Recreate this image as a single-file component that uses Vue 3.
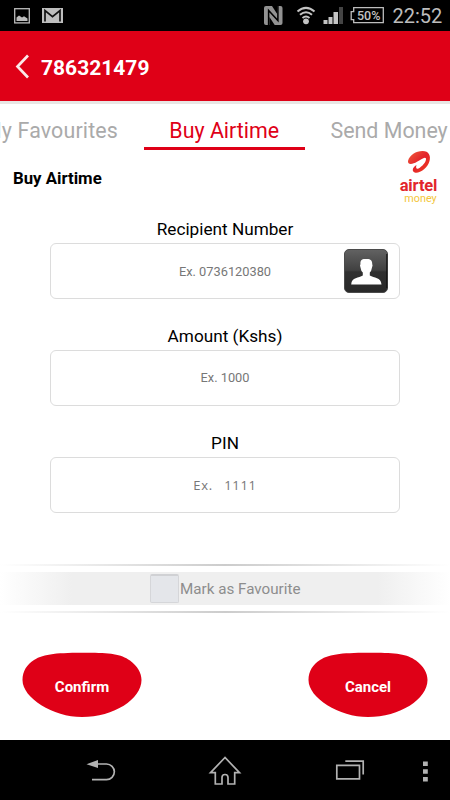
<script setup>
import { ref } from 'vue'

const tabs = [
  { name: 'My Favourites', cls: 'prev' },
  { name: 'Buy Airtime', cls: 'active' },
  { name: 'Send Money', cls: 'next' },
]
const fields = ref([
  { label: 'Recipient Number', hint: 'Ex. 0736120380', contact: true, cls: 'number' },
  { label: 'Amount (Kshs)', hint: 'Ex. 1000', cls: 'amount' },
  { label: 'PIN', hint: 'Ex. 1111', cls: 'pin' },
])
const actions = ['Confirm', 'Cancel']
</script>

<template>
  <div class="screen">
    <div class="status">
      <svg class="status-left" width="70" height="31" viewBox="0 0 70 31">
        <rect x="14.7" y="8.7" width="14.6" height="14.2" fill="none" stroke="#bcbcbc" stroke-width="1.3" />
        <path d="M16.500 21V17.500l2.500-2.100 3 2 2-1.200 3.500 2.300V21z" fill="#bcbcbc" />
        <rect x="42" y="8" width="21" height="15" fill="#bebebe" />
        <path d="M45 21.500V10.500l7.500 6.200 7.500-6.200V21.500" fill="none" stroke="#111" stroke-width="1.700" />
      </svg>
      <svg class="status-icons" width="127" height="31" viewBox="260 0 127 31">
        <path d="M264 8q0-2 2-2h14.500q2 0 2 2v15q0 2-2 2H266q-2 0-2-2z" fill="#929292" />
        <path d="M268.600 25V10.500L277.900 20.500V6" fill="none" stroke="#000" stroke-width="1.500" />
        <path d="M272 6h5.200v8zM269.400 17l5.300 8h-5.300z" fill="#000" />
        <g fill="none" stroke="#c4c4c4" stroke-width="2">
          <path d="M297.500 11.500q8.500-7.200 17 0M300 14.800q6-5.200 12 0M302.500 17.900q3.500-2.900 7 0" />
        </g>
        <circle cx="306" cy="21.300" r="2.900" fill="#c4c4c4" />
        <path d="M323.500 20h4v4h-4zM328.500 17h4v7h-4zM333.500 12h4.500v12h-4.500z" fill="#c4c4c4" />
        <path d="M339 7h4v17h-4z" fill="#444" />
        <path d="M353.700 7.700h29.600v15h-29.600v-3h-2.500v-8h2.500z" fill="none" stroke="#bdbdbd" stroke-width="1.300" />
        <text x="368.700" y="19.800" class="battery-text" text-anchor="middle">50%</text>
      </svg>
      <span class="clock">22:52</span>
    </div>

    <header class="header">
      <svg width="15" height="25" viewBox="0 0 15 25"><path d="M13 1.500L2.500 12.500 13 23.500" fill="none" stroke="#fbe9e9" stroke-width="2.700" /></svg>
      <span>786321479</span>
    </header>

    <nav class="tabs">
      <span v-for="t in tabs" :key="t.name" class="tab" :class="t.cls"><b>{{ t.name }}</b></span>
    </nav>

    <div class="section">
      <h1>Buy Airtime</h1>
      <div class="brand">
        <svg width="24" height="24" viewBox="407 150 24 24">
          <defs>
            <linearGradient id="swoosh" x1="0" y1="0" x2="1" y2="1">
              <stop offset="0" stop-color="#f0603c" /><stop offset=".5" stop-color="#e3222a" /><stop offset="1" stop-color="#f0401f" />
            </linearGradient>
          </defs>
          <path d="M408 161C409.500 155 416 151 422.500 151C429 151 431 156 429.500 161C428 167.500 420 173.500 415.500 172.800C411.500 172 412 167.500 416.500 165C415.500 168 416.500 169.500 418.500 168.500C422 166.500 426.500 162 426 158.500C425 156 421 159.500 417 161.800C412.500 164.500 407.500 165 408 161z" fill="url(#swoosh)" />
        </svg>
        <span class="logo-name">airtel</span>
        <span class="logo-sub">money</span>
      </div>
    </div>

    <main class="form">
      <div v-for="f in fields" :key="f.label" class="field" :class="f.cls">
        <label>{{ f.label }}</label>
        <div class="box">
          <span>{{ f.hint }}</span>
          <svg v-if="f.contact" class="contact" width="44" height="44" viewBox="0 0 44 44">
            <defs>
              <linearGradient id="tile" x1="0" y1="0" x2="0" y2="1">
                <stop offset="0" stop-color="#626262" /><stop offset=".48" stop-color="#414141" /><stop offset=".52" stop-color="#303030" /><stop offset="1" stop-color="#292929" />
              </linearGradient>
            </defs>
            <rect x=".5" y=".5" width="43" height="43" rx="4.500" fill="url(#tile)" stroke="#4b4b4b" />
            <path d="M42.800 5V39" stroke="#111" />
            <path d="M22 10C26 9.500 28.500 11.500 28.200 15Q29 16 28 18.500Q27.500 22 25.800 23.500V26.500C30 29 37 28 37.500 35.500H7.200C7.500 28 15 29 18.800 26.500V23.500Q17 22 16.500 18.500Q15.500 16 16.500 15C16 11.500 18 9.500 22 10z" fill="#fff" />
          </svg>
        </div>
      </div>
    </main>

    <div class="favourite">
      <div class="rule"></div>
      <div class="band"><i class="check"></i><span>Mark as Favourite</span></div>
      <div class="rule"></div>
    </div>

    <div class="actions">
      <button v-for="a in actions" :key="a">
        <svg width="120" height="66" viewBox="0 0 120 66"><path d="M65 .7C88 .7 99 2 108 8.500C115.500 14 119.500 21 119.500 28C119.500 47 92 65 60 65C31 65 .5 46 .5 28C.5 19 5 12.500 12 8C22 1.500 36 .7 65 .7z" fill="#df0017" /></svg>
        <span>{{ a }}</span>
      </button>
    </div>

    <footer class="navbar">
      <svg width="450" height="60" viewBox="0 740 450 60">
        <g fill="none" stroke="#b2b2b2" stroke-width="1.700">
          <path d="M96 764h10.500a7.800 7.800 0 0 1 0 15.700H92" />
          <path d="M225 757.500L210.500 772.700H215.300V784H222V777.500q0-3 3-3t3 3V784H234.700V772.700H239.500z" />
          <path d="M336.800 765.300H359.500V778.800H336.800zM345.300 761.200H363.200V774.500" />
        </g>
        <path d="M86.500 764.200L98 760V768zM423 761.500h4.800v4.500H423zM423 769.200h4.800v4.500H423zM423 777h4.800v4.500H423z" fill="#b2b2b2" />
      </svg>
    </footer>
  </div>
</template>

<style>
body { margin: 0; background: #fff; }
</style>

<style scoped>
* { box-sizing: border-box; }
.screen { width: 450px; height: 800px; display: flex; flex-direction: column; overflow: hidden; background: #fff; font-family: Roboto, sans-serif; color: #000; }
.status { height: 31px; flex: none; background: #000; display: flex; }
.status-left { margin-right: auto; }
.clock { width: 63px; padding-left: 5.500px; color: #bdbdbd; font-size: 20px; line-height: 33px; white-space: nowrap; }
.battery-text { font-size: 12.500px; font-weight: 500; fill: #c4c4c4; }
.header { height: 70px; flex: none; background: #df0017; display: flex; align-items: center; padding-left: 15px; color: #fff; font-size: 21px; font-weight: 700; }
.header span { margin: 3px 0 0 11px; }
.tabs { height: 49px; flex: none; display: flex; justify-content: space-between; border-top: 3px solid #e8e6e4; font-size: 21.400px; }
.tab { display: flex; justify-content: center; line-height: 53px; color: #aaa; white-space: nowrap; }
.tab b { font-weight: 400; }
.prev { width: 118px; justify-content: flex-end; letter-spacing: .15px; }
.active { width: 161px; color: #df0017; border-bottom: 3px solid #df0017; }
.next { width: 119.500px; justify-content: flex-start; }
.section { height: 58px; flex: none; display: flex; justify-content: space-between; padding: 0 9px 0 13px; }
.section h1 { margin: 0; font-size: 16.800px; line-height: 57px; font-weight: 700; }
.brand { width: 44px; display: flex; flex-direction: column; align-items: center; padding-top: 0; }
.brand svg { flex: none; }
.logo-name { font-size: 16.500px; line-height: 14px; font-weight: 700; letter-spacing: -.15px; color: #e2262c; margin-top: 5px; margin-right: 1px; }
.logo-sub { font-size: 10.800px; line-height: 11px; color: #f3c63a; margin: 0 0 0 3px; }
.form { height: 356px; flex: none; padding: 10px 50px 0; display: flex; flex-direction: column; }
.field { height: 106.800px; flex: none; display: flex; flex-direction: column; }
.field label { height: 25.100px; line-height: 23px; text-align: center; font-size: 17.200px; }
.box { height: 56px; border: 1px solid #dcdcdc; border-radius: 6px; display: flex; align-items: center; justify-content: center; font-size: 12.800px; color: #777; position: relative; }
.contact { position: absolute; right: 11px; top: 5px; }
.pin .box { font-family: "Open Sans", sans-serif; font-size: 13px; letter-spacing: .65px; word-spacing: 7.500px; }
.favourite { height: 49px; flex: none; display: flex; flex-direction: column; justify-content: space-between; }
.rule { height: 2px; background: linear-gradient(90deg, #fff, #ccc 50%, #fff); }
.band { height: 33px; display: flex; align-items: center; padding-left: 150px; background: linear-gradient(90deg, #fff, #efefef 16%, #efefef 84%, #fff); color: #8d8d8d; font-size: 15.200px; }
.band span { padding-top: 1px; }
.check { width: 29px; height: 29px; border: 1px solid #d5d6d9; border-top: 2px solid #d0d1d4; background: #e4e6ea; border-radius: 2px; margin-right: 1px; }
.actions { flex: 1; display: flex; justify-content: space-between; align-items: flex-start; padding: 39px 22px 0; }
.actions button { border: 0; padding: 0; background: none; display: grid; height: 66px; font-family: inherit; font-size: 15px; font-weight: 700; color: #fff; }
.actions svg, .actions span { grid-area: 1 / 1; }
.actions span { align-self: center; padding-top: 3px; }
.navbar { height: 60px; flex: none; background: #000; }
.navbar svg { display: block; }
</style>
